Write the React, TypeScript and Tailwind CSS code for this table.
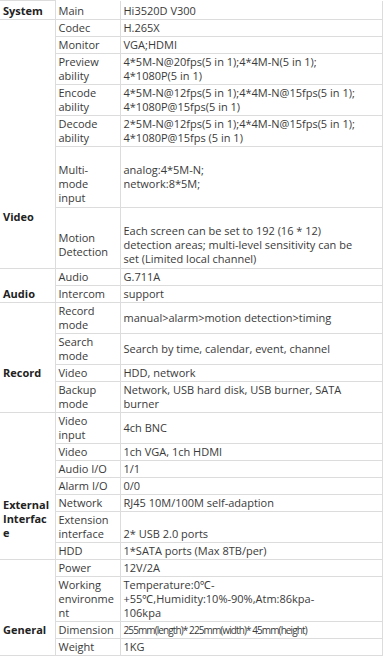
const font = { fontFamily: '"Open Sans", "Noto Sans", sans-serif' };

type Row = {
  group?: { text: React.ReactNode; span?: number; align?: "top" | "middle" };
  groupStart?: boolean;
  groupEnd?: boolean;
  label: React.ReactNode;
  value: React.ReactNode;
  tall?: boolean;
  valueTop?: boolean;
  small?: boolean;
  first?: boolean;
  skipGroup?: boolean;
};

const rows: Row[] = [
  { first: true, groupStart: true, groupEnd: true, group: { text: "System" }, label: "Main", value: "Hi3520D V300" },
  { groupStart: true, label: "Codec", value: "H.265X" },
  { label: "Monitor", value: "VGA;HDMI" },
  {
    label: <>Preview<br />ability</>,
    value: <>4*5M-N@20fps(5 in 1);4*4M-N(5 in 1);<br />4*1080P(5 in 1)</>,
  },
  {
    label: <>Encode<br />ability</>,
    value: <>4*5M-N@12fps(5 in 1);4*4M-N@15fps(5 in 1);<br />4*1080P@15fps(5 in 1)</>,
  },
  {
    label: <>Decode<br />ability</>,
    value: <>2*5M-N@12fps(5 in 1);4*4M-N@15fps(5 in 1);<br />4*1080P@15fps (5 in 1)</>,
  },
  {
    tall: true,
    valueTop: true,
    label: <><br />Multi-<br />mode<br />input</>,
    value: <><br />analog:4*5M-N;<br />network:8*5M;</>,
  },
  {
    tall: true,
    groupEnd: true,
    group: { text: "Video", align: "top" },
    label: <><br />Motion<br />Detection</>,
    value: (
      <>
        <br />
        Each screen can be set to 192 (16 * 12)
        <br />
        detection areas; multi-level sensitivity can be
        <br />
        set (Limited local channel)
      </>
    ),
  },
  { groupStart: true, label: "Audio", value: "G.711A" },
  { groupEnd: true, group: { text: "Audio" }, label: "Intercom", value: "support" },
  { groupStart: true, label: <>Record<br />mode</>, value: "manual>alarm>motion detection>timing" },
  { label: <>Search<br />mode</>, value: "Search by time, calendar, event, channel" },
  { group: { text: "Record" }, label: "Video", value: "HDD, network" },
  {
    groupEnd: true,
    label: <>Backup<br />mode</>,
    value: <>Network, USB hard disk, USB burner, SATA<br />burner</>,
  },
  { groupStart: true, label: <>Video<br />input</>, value: "4ch BNC" },
  { label: "Video", value: "1ch VGA, 1ch HDMI" },
  { label: "Audio I/O", value: "1/1" },
  { label: "Alarm I/O", value: "0/0" },
  {
    group: { text: <>External<br />Interfac<br />e</>, span: 2 },
    label: "Network",
    value: "RJ45 10M/100M self-adaption",
  },
  {
    valueTop: true,
    skipGroup: true,
    label: <>Extension<br />interface</>,
    value: <><br />2* USB 2.0 ports</>,
  },
  { groupEnd: true, label: "HDD", value: "1*SATA ports (Max 8TB/per)" },
  { groupStart: true, label: "Power", value: "12V/2A" },
  {
    label: <>Working<br />environme<br />nt</>,
    value: <>Temperature:0℃-<br />+55℃,Humidity:10%-90%,Atm:86kpa-<br />106kpa</>,
  },
  {
    group: { text: "General" },
    small: true,
    label: "Dimension",
    value: "255mm(length)* 225mm(width)* 45mm(height)",
  },
  { groupEnd: true, label: "Weight", value: "1KG" },
];

export default function App() {
  return (
    <div className="w-[384px] h-[656px] overflow-hidden bg-white" style={font}>
      <table className="border-collapse w-[383px] table-fixed text-[11px] leading-[14px] text-[#3a3a3a]">
        <colgroup>
          <col className="w-[55px]" />
          <col className="w-[65px]" />
          <col />
        </colgroup>
        <tbody>
          {rows.map((r, i) => {
            const pad = r.first ? "pt-[3px] pb-px" : r.tall ? "py-[2px]" : "py-px";
            return (
              <tr key={i}>
                {!r.skipGroup && (
                  <td
                    rowSpan={r.group?.span ?? 1}
                    className={`pl-[3px] pr-0 border-r border-[#dcdcdc] font-bold text-[#222] ${pad} ${
                      r.groupStart ? "border-t" : ""
                    } ${r.groupEnd ? "border-b" : ""} ${
                      r.group?.align === "top" ? "align-top" : "align-middle"
                    }`}
                  >
                    {r.group?.text}
                  </td>
                )}
                <td
                  className={`pl-[3px] pr-0 border border-[#dcdcdc] whitespace-nowrap ${pad} ${
                    r.first ? "border-t-0" : ""
                  } ${r.valueTop ? "align-top" : "align-middle"}`}
                >
                  {r.label}
                </td>
                <td
                  className={`pl-[3px] pr-0 border border-[#dcdcdc] whitespace-nowrap ${pad} ${
                    r.first ? "border-t-0" : ""
                  } ${r.valueTop ? "align-top" : "align-middle"} ${
                    r.small ? "text-[10px] tracking-[-0.9px]" : ""
                  }`}
                >
                  {r.value}
                </td>
              </tr>
            );
          })}
        </tbody>
      </table>
    </div>
  );
}
